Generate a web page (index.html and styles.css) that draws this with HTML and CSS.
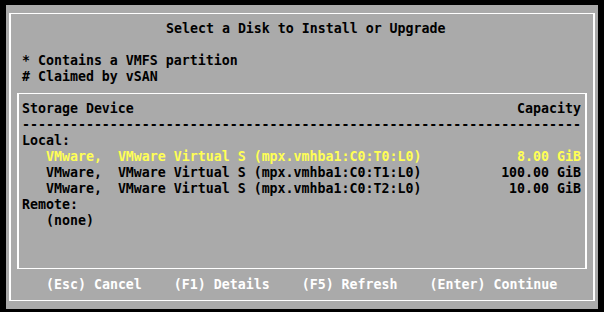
FILE: index.html
```html
<!DOCTYPE html>
<html>

<head>
    <title>Select a Disk to Install or Upgrade</title>
    <link rel="stylesheet" href="styles.css">
</head>

<body>
    <div class="screen">
        <div class="frame">
            <div class="title">Select a Disk to Install or Upgrade</div>

            <div class="legend">
                <div>* Contains a VMFS partition</div>
                <div># Claimed by vSAN</div>
            </div>

            <div class="disk-box">
                <div class="row">
                    <span>Storage Device</span>
                    <span>Capacity</span>
                </div>
                <div class="rule">----------------------------------------------------------------------</div>
                <div>Local:</div>
                <div class="row selected">
                    <span class="device">VMware,  VMware Virtual S (mpx.vmhba1:C0:T0:L0)</span>
                    <span>8.00 GiB</span>
                </div>
                <div class="row">
                    <span class="device">VMware,  VMware Virtual S (mpx.vmhba1:C0:T1:L0)</span>
                    <span>100.00 GiB</span>
                </div>
                <div class="row">
                    <span class="device">VMware,  VMware Virtual S (mpx.vmhba1:C0:T2:L0)</span>
                    <span>10.00 GiB</span>
                </div>
                <div>Remote:</div>
                <div class="device">(none)</div>
            </div>

            <div class="actions">
                <span>(Esc) Cancel</span>
                <span>(F1) Details</span>
                <span>(F5) Refresh</span>
                <span>(Enter) Continue</span>
            </div>
        </div>
    </div>
</body>

</html>
```

FILE: styles.css
```css
body {
    margin: 0;
    background: #000;
    font-family: 'DejaVu Sans Mono', 'Liberation Mono', monospace;
    font-size: 13.28px;
    font-weight: bold;
    line-height: 16px;
    color: #000;
}

.screen {
    width: 592px;
    height: 304px;
    margin: 5px 0 0 6px;
    padding: 8px 3px;
    box-sizing: border-box;
    background: #aaaaaa;
}

.frame {
    height: 288px;
    box-sizing: border-box;
    border-style: solid;
    border-color: #fff;
    border-width: 1px 2px;
    padding-top: 7px;
}

.title {
    padding-left: 155px;
    white-space: pre;
}

.legend {
    margin-top: 16px;
    padding-left: 11px;
}

.disk-box {
    height: 176px;
    box-sizing: border-box;
    margin: 8px 6px 0 6px;
    padding: 7px 4px 0 3px;
    border: 1px solid #fff;
    border-left-width: 2px;
    border-right-width: 2px;
}

.row {
    display: flex;
    justify-content: space-between;
    white-space: pre;
}

.rule {
    white-space: pre;
}

.device {
    padding-left: 24px;
    white-space: pre;
}

.selected {
    color: #ffff55;
}

.actions {
    display: flex;
    gap: 32px;
    margin-top: 8px;
    padding-left: 35px;
    color: #fff;
    white-space: pre;
}
```
